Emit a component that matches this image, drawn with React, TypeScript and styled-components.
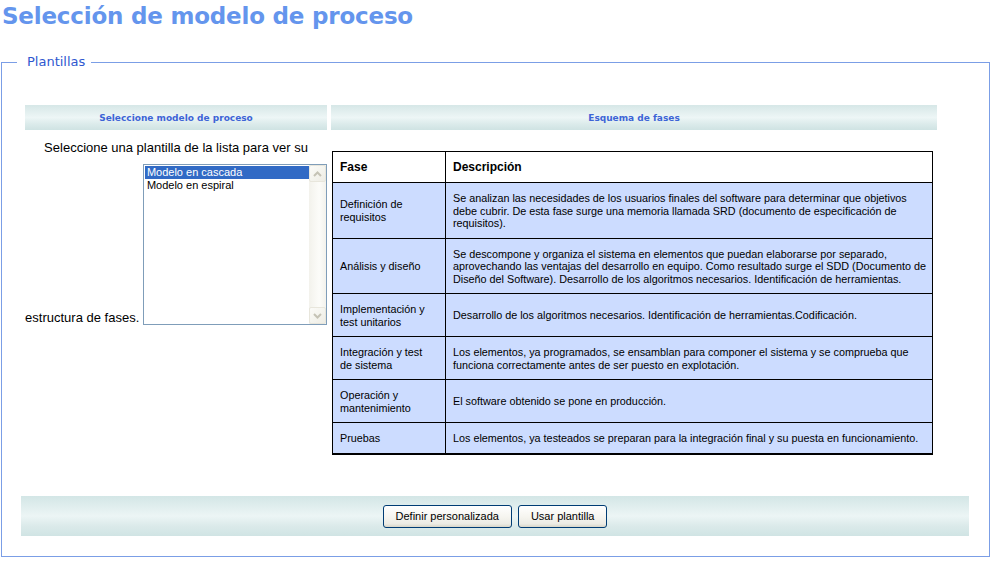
import styled, { createGlobalStyle } from "styled-components";

const GlobalStyle = createGlobalStyle`
  html, body {
    margin: 0;
    padding: 0;
    background: #ffffff;
  }
  body {
    font-family: "Liberation Sans", Arial, sans-serif;
    color: #000000;
  }
`;

type Phase = {
    name: string[];
    description: string[];
};

const phases: Phase[] = [
    {
        name: ["Definición de", "requisitos"],
        description: [
            "Se analizan las necesidades de los usuarios finales del software para determinar que objetivos",
            "debe cubrir. De esta fase surge una memoria llamada SRD (documento de especificación de",
            "requisitos).",
        ],
    },
    {
        name: ["Análisis y diseño"],
        description: [
            "Se descompone y organiza el sistema en elementos que puedan elaborarse por separado,",
            "aprovechando las ventajas del desarrollo en equipo. Como resultado surge el SDD (Documento de",
            "Diseño del Software). Desarrollo de los algoritmos necesarios. Identificación de herramientas.",
        ],
    },
    {
        name: ["Implementación y", "test unitarios"],
        description: [
            "Desarrollo de los algoritmos necesarios. Identificación de herramientas.Codificación.",
        ],
    },
    {
        name: ["Integración y test", "de sistema"],
        description: [
            "Los elementos, ya programados, se ensamblan para componer el sistema y se comprueba que",
            "funciona correctamente antes de ser puesto en explotación.",
        ],
    },
    {
        name: ["Operación y", "mantenimiento"],
        description: ["El software obtenido se pone en producción."],
    },
    {
        name: ["Pruebas"],
        description: [
            "Los elementos, ya testeados se preparan para la integración final y su puesta en funcionamiento.",
        ],
    },
];

const templates = ["Modelo en cascada", "Modelo en espiral"];

const withBreaks = (lines: string[]) =>
    lines.map((line, i) => (
        <span key={i}>
            {i > 0 && <br />}
            {line}
        </span>
    ));

const Chevron = ({ up }: { up?: boolean }) => (
    <svg width="9" height="6" viewBox="0 0 9 6">
        <path
            d={up ? "M1 5 L4.5 1.5 L8 5" : "M1 1 L4.5 4.5 L8 1"}
            fill="none"
            stroke="#c5c3b6"
            strokeWidth="2"
        />
    </svg>
);

export default function App() {
    return (
        <>
            <GlobalStyle />
            <Title>Selección de modelo de proceso</Title>
            <Frame>
                <Legend>Plantillas</Legend>
                <Columns>
                    <HeaderBar>Seleccione modelo de proceso</HeaderBar>
                    <HeaderBar>Esquema de fases</HeaderBar>

                    <LeftCell>
                        Seleccione una plantilla de la lista para ver su{" "}
                        <NoWrap>
                            estructura de fases.{" "}
                            <ListBox>
                                <Options>
                                    {templates.map((t, i) => (
                                        <Option key={t} selected={i === 0}>
                                            {t}
                                        </Option>
                                    ))}
                                </Options>
                                <ScrollBar>
                                    <ArrowButton>
                                        <Chevron up />
                                    </ArrowButton>
                                    <ArrowButton>
                                        <Chevron />
                                    </ArrowButton>
                                </ScrollBar>
                            </ListBox>
                        </NoWrap>
                    </LeftCell>

                    <RightCell>
                        <PhaseTable>
                            <thead>
                                <tr>
                                    <HeadCell>Fase</HeadCell>
                                    <HeadCell>Descripción</HeadCell>
                                </tr>
                            </thead>
                            <tbody>
                                {phases.map((p) => (
                                    <tr key={p.name.join(" ")}>
                                        <NameCell>{withBreaks(p.name)}</NameCell>
                                        <DescCell>{withBreaks(p.description)}</DescCell>
                                    </tr>
                                ))}
                            </tbody>
                        </PhaseTable>
                    </RightCell>
                </Columns>

                <ButtonBar>
                    <Button>Definir personalizada</Button>
                    <Button>Usar plantilla</Button>
                </ButtonBar>
            </Frame>
        </>
    );
}

const Title = styled.h1`
  margin: 0;
  padding-left: 2px;
  height: 32px;
  line-height: 32px;
  font-family: "DejaVu Sans", Verdana, sans-serif;
  font-size: 23px;
  letter-spacing: -0.2px;
  font-weight: bold;
  color: #6495ed;
  white-space: nowrap;
`;

const Frame = styled.fieldset`
  margin: 22px 0 0 1px;
  padding: 35px 0 20px 0;
  width: 989px;
  box-sizing: border-box;
  border: 1px solid #7b9ee6;
  min-width: 0;
`;

const Legend = styled.legend`
  margin-left: 15px;
  padding: 0 6px 0 10px;
  font-family: "DejaVu Sans", Verdana, sans-serif;
  font-size: 13px;
  line-height: 16px;
  color: #2f58cf;
`;

const Columns = styled.div`
  display: grid;
  grid-template-columns: 302px 606px;
  column-gap: 4px;
  margin-left: 23px;
`;

const HeaderBar = styled.div`
  height: 25px;
  display: flex;
  align-items: center;
  justify-content: center;
  background: linear-gradient(
    to bottom,
    #d6e7e7 0%,
    #e4f0f0 30%,
    #edf6f6 50%,
    #dcebeb 75%,
    #cfe3e3 100%
  );
  font-family: "DejaVu Sans", Verdana, sans-serif;
  font-size: 9px;
  font-weight: bold;
  color: #3d64d6;
`;

const LeftCell = styled.div`
  padding-top: 9px;
  text-align: center;
  font-size: 13px;
  line-height: 17px;
`;

const NoWrap = styled.span`
  white-space: nowrap;
`;

const ListBox = styled.div`
  display: inline-block;
  vertical-align: baseline;
  overflow: hidden;
  width: 184px;
  height: 161px;
  box-sizing: border-box;
  margin: 8px 0 -3px 0;
  border: 1px solid #7f9db9;
  background: #ffffff;
  text-align: left;
`;

const Options = styled.div`
  float: left;
  width: 164px;
  padding: 1px 0 0 1px;
`;

const Option = styled.div<{ selected?: boolean }>`
  height: 13px;
  line-height: 13px;
  padding-left: 2px;
  font-size: 11px;
  white-space: nowrap;
  background: ${(p) => (p.selected ? "#316ac5" : "transparent")};
  color: ${(p) => (p.selected ? "#ffffff" : "#000000")};
`;

const ScrollBar = styled.div`
  float: right;
  width: 17px;
  height: 159px;
  display: flex;
  flex-direction: column;
  justify-content: space-between;
  background: linear-gradient(to right, #f3f2ec, #fcfcf9 60%, #f3f2ec);
`;

const ArrowButton = styled.div`
  width: 17px;
  height: 17px;
  box-sizing: border-box;
  display: flex;
  align-items: center;
  justify-content: center;
  border: 1px solid #e8e6dc;
  border-radius: 2px;
  background: linear-gradient(to bottom right, #fbfbf8, #eeede5);
`;

const RightCell = styled.div`
  padding-top: 21px;
`;

const PhaseTable = styled.table`
  margin-left: 1px;
  width: 601px;
  border-collapse: collapse;
  border: 1px solid #000000;
  border-bottom-width: 2px;
  table-layout: fixed;
`;

const HeadCell = styled.th`
  border: 1px solid #000000;
  background: #ffffff;
  text-align: left;
  padding: 9px 7px 8px 7px;
  font-size: 12px;
  line-height: 13px;
  font-weight: bold;

  &:first-child {
    width: 98px;
  }
`;

const NameCell = styled.td`
  border: 1px solid #000000;
  background: #ccdcff;
  padding: 9px 7px 8px 7px;
  font-size: 10.8px;
  line-height: 12.5px;
  vertical-align: middle;
  white-space: nowrap;
`;

const DescCell = styled(NameCell)``;

const ButtonBar = styled.div`
  margin: 41px 0 0 19px;
  width: 948px;
  height: 40px;
  display: flex;
  align-items: center;
  justify-content: center;
  gap: 6px;
  padding-top: 1px;
  box-sizing: border-box;
  background: linear-gradient(
    to bottom,
    #d3e6e6 0%,
    #e2efef 30%,
    #ecf5f5 50%,
    #dbeaea 75%,
    #d0e4e4 100%
  );
`;

const Button = styled.button`
  height: 23px;
  padding: 0 12px;
  border: 1px solid #003c74;
  border-radius: 3px;
  background: linear-gradient(to bottom, #ffffff 0%, #f6f5f0 50%, #ecebe4 85%, #d8d5c8 100%);
  font-family: "Liberation Sans", Arial, sans-serif;
  font-size: 11px;
  color: #000000;
  cursor: pointer;
`;
